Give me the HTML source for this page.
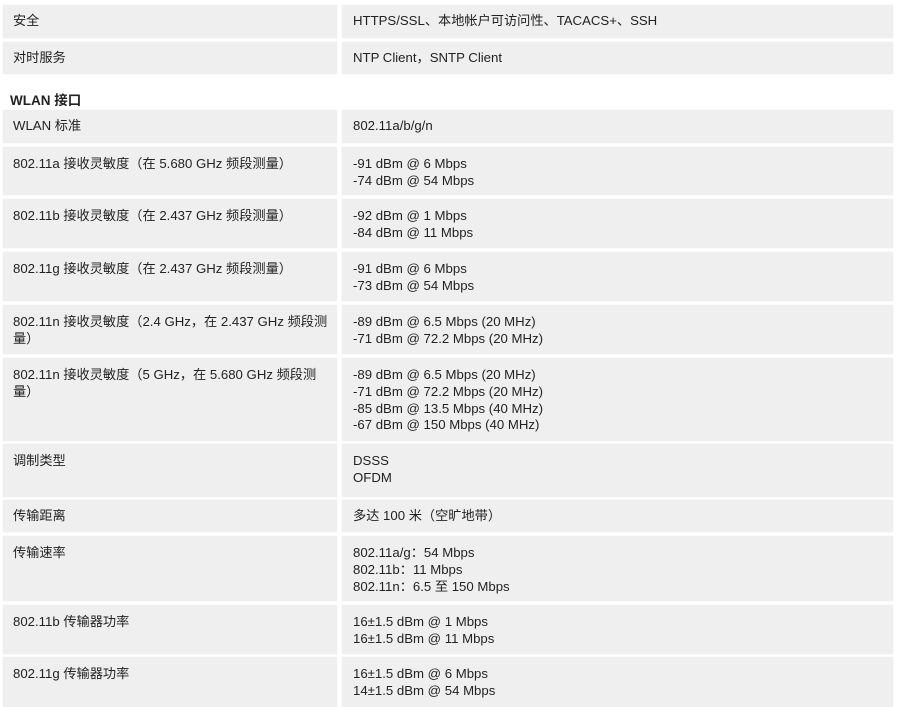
<!DOCTYPE html>
<html><head><meta charset="utf-8"><style>
body{margin:0;width:915px;height:701px;overflow:hidden;background:#fff;position:relative;font-family:"Liberation Sans","Noto Sans CJK SC",sans-serif;font-size:13.2px;color:#222;}
.c{position:absolute;background:#efefef;box-sizing:border-box;padding:9px 0 0 10px;line-height:16.8px;box-shadow:0 0 1px #e4e4e4;}
.l{left:3px;width:334px;}
.r{left:342px;width:551px;padding-left:11px;}
.h{position:absolute;left:10px;top:89px;font-weight:bold;font-size:13.5px;}
</style></head><body>
<div class="c l" style="top:5px;height:33px;padding-top:8px">安全</div><div class="c r" style="top:5px;height:33px;padding-top:8px">HTTPS/SSL、本地帐户可访问性、TACACS+、SSH</div>
<div class="c l" style="top:42px;height:32px;padding-top:8px">对时服务</div><div class="c r" style="top:42px;height:32px;padding-top:8px">NTP Client，SNTP Client</div>
<div class="h">WLAN 接口</div>
<div class="c l" style="top:110px;height:33px;padding-top:8px">WLAN 标准</div><div class="c r" style="top:110px;height:33px;padding-top:8px">802.11a/b/g/n</div>
<div class="c l" style="top:147px;height:48px">802.11a 接收灵敏度（在 5.680 GHz 频段测量）</div><div class="c r" style="top:147px;height:48px">-91 dBm @ 6 Mbps<br>-74 dBm @ 54 Mbps</div>
<div class="c l" style="top:199px;height:49px">802.11b 接收灵敏度（在 2.437 GHz 频段测量）</div><div class="c r" style="top:199px;height:49px">-92 dBm @ 1 Mbps<br>-84 dBm @ 11 Mbps</div>
<div class="c l" style="top:252px;height:49px">802.11g 接收灵敏度（在 2.437 GHz 频段测量）</div><div class="c r" style="top:252px;height:49px">-91 dBm @ 6 Mbps<br>-73 dBm @ 54 Mbps</div>
<div class="c l" style="top:305px;height:49px">802.11n 接收灵敏度（2.4 GHz，在 2.437 GHz 频段测<br>量）</div><div class="c r" style="top:305px;height:49px">-89 dBm @ 6.5 Mbps (20 MHz)<br>-71 dBm @ 72.2 Mbps (20 MHz)</div>
<div class="c l" style="top:358px;height:83px">802.11n 接收灵敏度（5 GHz，在 5.680 GHz 频段测<br>量）</div><div class="c r" style="top:358px;height:83px">-89 dBm @ 6.5 Mbps (20 MHz)<br>-71 dBm @ 72.2 Mbps (20 MHz)<br>-85 dBm @ 13.5 Mbps (40 MHz)<br>-67 dBm @ 150 Mbps (40 MHz)</div>
<div class="c l" style="top:444px;height:53px">调制类型</div><div class="c r" style="top:444px;height:53px">DSSS<br>OFDM</div>
<div class="c l" style="top:500px;height:32px;padding-top:8px">传输距离</div><div class="c r" style="top:500px;height:32px;padding-top:8px">多达 100 米（空旷地带）</div>
<div class="c l" style="top:536px;height:65px">传输速率</div><div class="c r" style="top:536px;height:65px">802.11a/g：54 Mbps<br>802.11b：11 Mbps<br>802.11n：6.5 至 150 Mbps</div>
<div class="c l" style="top:605px;height:49px">802.11b 传输器功率</div><div class="c r" style="top:605px;height:49px">16±1.5 dBm @ 1 Mbps<br>16±1.5 dBm @ 11 Mbps</div>
<div class="c l" style="top:657px;height:50px">802.11g 传输器功率</div><div class="c r" style="top:657px;height:50px">16±1.5 dBm @ 6 Mbps<br>14±1.5 dBm @ 54 Mbps</div>
</body></html>
